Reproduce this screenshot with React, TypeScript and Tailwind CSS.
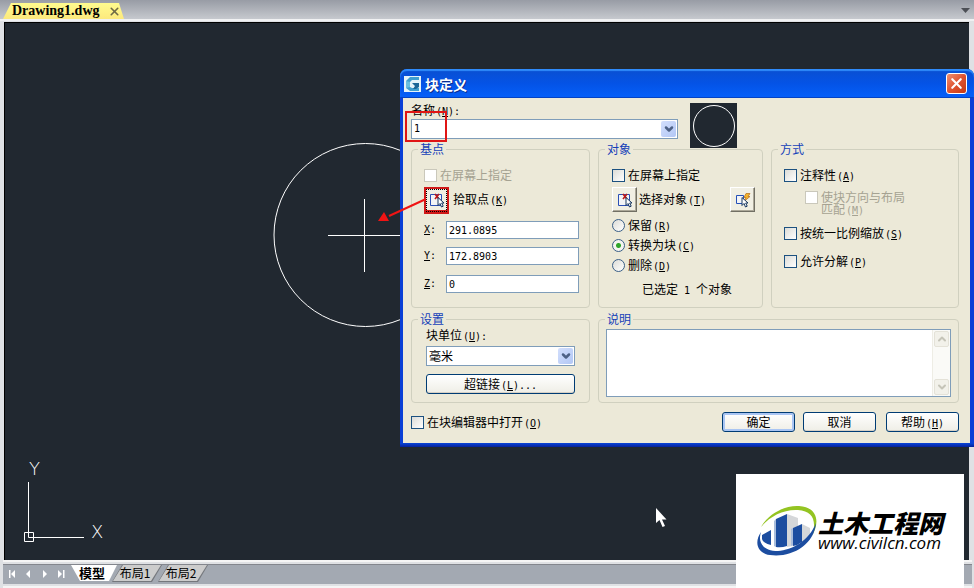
import { clsx } from "clsx";
import { ChevronDown, ChevronUp, X } from "lucide-react";
import type { ReactNode } from "react";

const LATIN = "font-['DejaVu_Sans_Mono',monospace] text-[10px]";

function Key({ children, tail }: { children: string; tail?: string }) {
  return (
    <span className={clsx("pl-px leading-0", LATIN)}>
      (<u className="underline-offset-1">{children}</u>){tail}
    </span>
  );
}

function Group({
  title,
  className,
  children,
}: {
  title: string;
  className?: string;
  children: ReactNode;
}) {
  return (
    <fieldset
      className={clsx("min-w-0 rounded-[4px] border border-[#d0d0bf]", className)}
    >
      <legend className="ml-1.5 px-0.5 leading-4 text-[#1541b8]">{title}</legend>
      {children}
    </fieldset>
  );
}

function Check({
  id,
  disabled,
  className,
  children,
}: {
  id: string;
  disabled?: boolean;
  className?: string;
  children: ReactNode;
}) {
  return (
    <div className={clsx("flex items-center gap-[3px]", className)}>
      <input
        id={id}
        type="checkbox"
        disabled={disabled}
        className="size-[13px] shrink-0 appearance-none border border-[#1c5180] bg-linear-to-br from-[#dcdcd7] to-white checked:bg-[#21a121] disabled:border-[#cac8bb] disabled:bg-white disabled:bg-none"
      />
      <label htmlFor={id} className={disabled ? "text-[#a5a292]" : undefined}>
        {children}
      </label>
    </div>
  );
}

function Radio({
  id,
  defaultChecked,
  children,
}: {
  id: string;
  defaultChecked?: boolean;
  children: ReactNode;
}) {
  return (
    <div className="flex h-5 items-center gap-[3px]">
      <input
        id={id}
        type="radio"
        name="objects"
        defaultChecked={defaultChecked}
        className="size-[13px] shrink-0 appearance-none rounded-full border border-[#3a5f87] bg-linear-to-br from-[#dcdcd7] to-white checked:bg-[radial-gradient(circle,#2fa52b_0,#2fa52b_2px,#f4f4f0_3px)]"
      />
      <label htmlFor={id}>{children}</label>
    </div>
  );
}

function Dropdown({ id, value, latin }: { id: string; value: string; latin?: boolean }) {
  return (
    <div className="relative">
      <select
        id={id}
        defaultValue={value}
        className={clsx(
          "block h-5 w-full appearance-none border border-[#7f9db9] bg-white pl-0.5 leading-4",
          latin && LATIN,
        )}
      >
        <option>{value}</option>
      </select>
      <span className="pointer-events-none absolute top-0.5 right-0.5 flex h-4 w-[15px] items-center justify-center rounded-[2px] bg-linear-to-br from-[#d3dffc] to-[#b2c7f5]">
        <ChevronDown size={12} strokeWidth={5} color="#4d6185" />
      </span>
    </div>
  );
}

function Coordinate({
  axis,
  value,
  className,
}: {
  axis: string;
  value: string;
  className?: string;
}) {
  const id = `base-${axis}`;
  return (
    <div className={clsx("flex items-center", LATIN, className)}>
      <label htmlFor={id} className="w-[22px]">
        <u className="underline-offset-1">{axis}</u>:
      </label>
      <input
        id={id}
        defaultValue={value}
        className="h-[18px] w-[133px] border border-[#7f9db9] bg-white px-0.5"
      />
    </div>
  );
}

function PushButton({
  primary,
  className,
  children,
}: {
  primary?: boolean;
  className?: string;
  children: ReactNode;
}) {
  return (
    <button
      type="button"
      className={clsx(
        "h-5 rounded-[3px] border border-[#003c74] bg-linear-to-b from-white to-[#efeee6] leading-4",
        primary
          ? "shadow-[inset_0_0_0_2px_#a9c5f3]"
          : "shadow-[inset_0_-1px_0_#d6d0c5]",
        className,
      )}
    >
      {children}
    </button>
  );
}

function PickIcon() {
  return (
    <svg width="16" height="16" viewBox="0 0 16 16" fill="none">
      <path d="M1.500 2.500h11v11h-11z" fill="#f3f4f6" stroke="#2b4fb5" />
      <path d="M6 2l4 5M10 2L6 7" stroke="#c01818" strokeWidth="1.600" />
      <path d="M9 5.500v8l2-2 1.500 3.500 1.700-.8-1.500-3.200H15z" fill="#fff" stroke="#17365f" />
    </svg>
  );
}

function QuickSelectIcon() {
  return (
    <svg width="16" height="16" viewBox="0 0 16 16" fill="none">
      <path d="M1.500 3.500h7v8h-7z" fill="#f3f4f6" stroke="#2450b8" />
      <path d="M11 1.500h4l-2 3h2L9.500 9l1.500-3.500H9z" fill="#f5b52b" stroke="#bd7723" strokeWidth=".8" />
      <path d="M7 5.500v8l2-2 1.500 3.500 1.700-.8-1.500-3.200H13z" fill="#fff" stroke="#17365f" />
    </svg>
  );
}

function ToolButton({ label, children }: { label: string; children: ReactNode }) {
  return (
    <button
      type="button"
      aria-label={label}
      className="flex size-[25px] shrink-0 items-center justify-center border border-t-white border-r-[#716f64] border-b-[#716f64] border-l-white bg-[#f1efe3] shadow-[inset_-1px_-1px_0_#aca899]"
    >
      {children}
    </button>
  );
}

function BlockDialog() {
  return (
    <section
      aria-label="块定义"
      className="absolute top-[69px] right-0 left-[400px] rounded-t-[7px] bg-[#0a3fd6] text-xs text-black"
    >
      <header className="flex h-[29px] items-center rounded-t-[7px] bg-linear-to-b from-[#0a4fd0] via-[#0453e6] to-[#0560fa] pr-[7px] pl-1 shadow-[inset_0_2px_1px_#2f8bfb,inset_0_-1px_0_#0443c4]">
        <svg width="17" height="16" viewBox="0 0 17 16">
          <path d="M0 0h17v16H0z" fill="#e4f3fa" />
          <path d="M2 5l4-4h9v3H8L6 6v5l2 1h7v3H6l-4-3z" fill="#3f9fd0" />
          <path d="M8 7h7v4l-3 2H9l2-3z" fill="#1b6697" />
          <path d="M2 5l4 1v5l-4 1z" fill="#68bfdf" />
        </svg>
        <h1 className="ml-1 flex-1 text-[14px] leading-4 font-bold text-white [text-shadow:1px_1px_0_#0b2f8f]">
          块定义
        </h1>
        <button
          type="button"
          aria-label="关闭"
          className="flex size-[21px] items-center justify-center rounded-[3px] border border-white bg-linear-to-br from-[#ee8f71] via-[#df5330] to-[#c53a12]"
        >
          <X size={17} strokeWidth={3} color="#fff" />
        </button>
      </header>

      <form className="mr-1 ml-[3px] bg-[#ece9d8] pr-[11px] pl-2">
        <div className="flex h-[50px] items-start gap-3 pt-1">
          <div className="w-[267px]">
            <label htmlFor="name" className="block h-[17px] leading-4">
              名称<Key tail=":">N</Key>
            </label>
            <Dropdown id="name" value="1" latin />
          </div>
          <svg width="47" height="45" viewBox="0 0 47 45" className="mt-px">
            <path d="M0 0h47v45H0z" fill="#212830" />
            <circle cx="24" cy="23" r="20.500" fill="none" stroke="#fff" />
          </svg>
        </div>

        <div className="-mt-[7px] flex gap-2">
          <Group title="基点" className="h-[167px] w-[179px] shrink-0">
            <div className="pt-2.5 pl-3">
              <Check id="base-screen" disabled className="h-4">
                在屏幕上指定
              </Check>
              <div className="mt-1 flex h-[27px] gap-1">
                <button
                  id="pick-point"
                  type="button"
                  aria-label="拾取点"
                  className="flex h-[27px] w-[25px] items-center justify-center border-2 border-b-4 border-[#d01818] bg-[#f1efe3] outline-1 -outline-offset-3 outline-black outline-dotted"
                >
                  <PickIcon />
                </button>
                <label htmlFor="pick-point" className="leading-6">
                  拾取点<Key>K</Key>
                </label>
              </div>
              <Coordinate axis="X" value="291.0895" className="mt-[7px]" />
              <Coordinate axis="Y" value="172.8903" className="mt-2" />
              <Coordinate axis="Z" value="0" className="mt-2.5" />
            </div>
          </Group>

          <Group title="对象" className="h-[167px] w-[165px] shrink-0">
            <div className="px-[13px] pt-2.5">
              <Check id="object-screen" className="h-4">
                在屏幕上指定
              </Check>
              <div className="mt-1 -mr-1.5 flex h-7 gap-0.5">
                <ToolButton label="选择对象">
                  <PickIcon />
                </ToolButton>
                <span className="flex-1 leading-6">
                  选择对象<Key>T</Key>
                </span>
                <ToolButton label="快速选择">
                  <QuickSelectIcon />
                </ToolButton>
              </div>
              <Radio id="keep">
                保留<Key>R</Key>
              </Radio>
              <Radio id="convert" defaultChecked>
                转换为块<Key>C</Key>
              </Radio>
              <Radio id="delete">
                删除<Key>D</Key>
              </Radio>
              <p className="mt-1.5 pl-[30px] leading-4">
                已选定<span className={clsx("px-1.5", LATIN)}>1</span>个对象
              </p>
            </div>
          </Group>

          <Group title="方式" className="h-[167px] flex-1">
            <div className="pt-2.5 pl-3">
              <Check id="annotative" className="h-4">
                注释性<Key>A</Key>
              </Check>
              <Check
                id="match"
                disabled
                className="mt-2 ml-[21px] h-6 items-start leading-3"
              >
                使块方向与布局
                <br />
                匹配<Key>M</Key>
              </Check>
              <Check id="scale" className="mt-2.5 h-4">
                按统一比例缩放<Key>S</Key>
              </Check>
              <Check id="explode" className="mt-3 h-4">
                允许分解<Key>P</Key>
              </Check>
            </div>
          </Group>
        </div>

        <div className="mt-[3px] flex gap-2">
          <Group title="设置" className="w-[179px] shrink-0">
            <div className="px-3.5 pb-2">
              <label htmlFor="unit" className="mb-[3px] block h-4 leading-4">
                块单位<Key tail=":">U</Key>
              </label>
              <Dropdown id="unit" value="毫米" />
              <PushButton className="mt-2 w-full">
                超链接<Key tail="...">L</Key>
              </PushButton>
            </div>
          </Group>

          <Group title="说明" className="flex-1">
            <div className="mx-[7px] mt-0.5 flex h-[68px] border border-[#7f9db9] bg-white">
              <textarea aria-label="说明" className="min-w-0 flex-1 resize-none px-1" />
              <div className="flex w-[18px] flex-col justify-between border-l border-[#eeede5] bg-[#fafaf7] p-px">
                <span className="flex h-4 items-center justify-center rounded-[2px] border border-[#e4e2d8] bg-[#f2f1ea]">
                  <ChevronUp size={12} strokeWidth={4} color="#c5c4b8" />
                </span>
                <span className="flex h-4 items-center justify-center rounded-[2px] border border-[#e4e2d8] bg-[#f2f1ea]">
                  <ChevronDown size={12} strokeWidth={4} color="#c5c4b8" />
                </span>
              </div>
            </div>
          </Group>
        </div>

        <div className="flex items-center pt-[9px] pb-[11px]">
          <Check id="open-editor" className="flex-1">
            在块编辑器中打开<Key>O</Key>
          </Check>
          <PushButton primary className="w-[73px]">
            确定
          </PushButton>
          <PushButton className="ml-2 w-[73px]">取消</PushButton>
          <PushButton className="ml-2.5 w-[73px]">
            帮助<Key>H</Key>
          </PushButton>
        </div>
      </form>
      <div className="h-1 bg-linear-to-b from-[#0a45d8] to-[#06209a]" />
    </section>
  );
}

// Model space geometry, the UCS marker and the mouse pointer
function Drawing() {
  return (
    <>
      <svg
        width="200"
        height="200"
        viewBox="0 0 200 200"
        className="absolute top-[112px] left-[259px]"
        fill="none"
        stroke="#fff"
      >
        <circle cx="101.500" cy="100" r="91.500" />
        <path d="M64 100.500h73M100.500 64v73" />
      </svg>
      <svg
        width="100"
        height="90"
        viewBox="0 0 100 90"
        className="absolute bottom-3 left-[15px]"
        fill="none"
        stroke="#fff"
      >
        <path d="M8.500 24v55.500H64M4.500 74.500h9v9h-9z" />
        <g
          fill="#fff"
          stroke="none"
          className="font-['DejaVu_Sans',sans-serif] text-[18px] font-extralight"
        >
          <text x="9" y="17">
            Y
          </text>
          <text x="71" y="80">
            X
          </text>
        </g>
      </svg>
      <svg
        width="12"
        height="20"
        viewBox="0 0 12 20"
        className="absolute bottom-8 left-[651px]"
        fill="#fff"
      >
        <path d="M0 0v15l3.500-3L6.500 19l2.500-1-3-6.500h4.500z" />
      </svg>
    </>
  );
}

function SheetTab({ children }: { children: ReactNode }) {
  return (
    <div className="w-[50px] bg-[#74777c] px-px pb-px [clip-path:polygon(10px_0,100%_0,calc(100%-10px)_100%,0_100%)]">
      <button
        type="button"
        className="block h-4 w-full bg-[#cccccc] pr-1 leading-4 [clip-path:polygon(10px_0,100%_0,calc(100%-10px)_100%,0_100%)]"
      >
        {children}
      </button>
    </div>
  );
}

function LayoutTabs() {
  return (
    <nav className="flex h-5 items-start border-t border-[#83868d] bg-[#a3a9b2] text-xs text-black">
      <svg width="68" height="17" viewBox="0 0 68 17" fill="#fff">
        <path d="M6 5h1.500v8H6zM12 5v8l-4-4zM27 5v8l-4-4zM40 5v8l4-4zM55 5v8l4-4zM60 5h1.500v8H60z" />
      </svg>
      <button
        type="button"
        className="z-10 h-4 w-[46px] bg-white pr-1 text-[13px] leading-4 font-bold [clip-path:polygon(0_0,100%_0,calc(100%-8px)_100%,9px_100%)]"
      >
        模型
      </button>
      <div className="-ml-[5px] flex -space-x-1">
        <SheetTab>布局1</SheetTab>
        <SheetTab>布局2</SheetTab>
      </div>
    </nav>
  );
}

function Watermark() {
  return (
    <aside className="absolute right-2.5 bottom-0 flex h-[114px] w-[228px] items-center bg-white pl-5 text-black">
      <svg width="62" height="54" viewBox="0 0 62 54" className="shrink-0">
        <path d="M5 23C12 10 29 1 43 2c17 1 22 14 13 30 5-15 1-25-14-26C28 5 14 12 5 23z" fill="#94c422" />
        <path d="M31 10l11 4v27l-11 2z" fill="#d5d7d9" />
        <path d="M46 20l8 4v8q-3 4-8 7z" fill="#d5d7d9" />
        <path d="M20 15l11-5v32q-6 2-11 1z" fill="#1c4da0" />
        <path d="M6 31l9-5v15q-8-2-9-6z" fill="#1c4da0" />
        <path d="M37 24l9-4v18q-4 3-9 4z" fill="#1c4da0" />
        <path d="M20 15l-2 2v25l2 1zM37 24l-2 1v17l2-1z" fill="#a9bddb" />
        <path d="M5 28C-2 38 1 49 14 51 34 54 58 42 60 19 53 37 36 46 22 47 9 47 1 40 5 28z" fill="#1c4da0" />
      </svg>
      <div>
        <p className="text-[25px] leading-6 font-black whitespace-nowrap italic">
          土木工程网
        </p>
        <p className="font-['Open_Sans',sans-serif] text-[17px] leading-[18px] font-medium italic">
          www.civilcn.com
        </p>
      </div>
    </aside>
  );
}

export default function App() {
  return (
    <div className="relative flex min-h-screen flex-col overflow-hidden bg-[#dfe1e4] font-['Noto_Sans_CJK_SC',sans-serif]">
      <header className="flex h-[19px] items-end justify-between bg-linear-to-b from-[#989ca5] to-[#c6c9ce] pr-[3px] pl-[3px]">
        <div className="flex h-4 w-[121px] items-center justify-between bg-linear-to-b from-[#fffb8e] to-[#fce97d] pr-[3px] pl-[9px] [clip-path:polygon(8px_0,116px_0,100%_100%,0_100%)]">
          <span className="font-['Liberation_Serif',serif] text-sm leading-4 font-bold text-black">
            Drawing1.dwg
          </span>
          <button type="button" aria-label="关闭图形">
            <X size={13} strokeWidth={3} color="#6f6a45" />
          </button>
        </div>
        <svg width="10" height="19" viewBox="0 0 10 19">
          <path d="M0 8h9l-4.500 5z" fill="#4c4f55" />
        </svg>
      </header>

      <div className="flex flex-1 border-t-2 border-[#f0f1f2] pt-px pr-[5px] pl-1">
        <main className="relative flex-1 border-t border-l border-black bg-[#212830]">
          <Drawing />
        </main>
      </div>

      <footer className="mr-0.5 ml-[3px] border-y-2 border-[#f5f5f5] py-0.5">
        <LayoutTabs />
      </footer>

      <BlockDialog />

      <div className="pointer-events-none absolute top-[111px] left-[405px] h-[31px] w-[42px] border-2 border-[#e01515]" />
      <svg
        width="52"
        height="28"
        viewBox="0 0 52 28"
        className="pointer-events-none absolute top-[197px] left-[375px]"
      >
        <path d="M51 2L14 19" stroke="#f01414" strokeWidth="2" />
        <path d="M3 24l6-9 5 9z" fill="#f01414" />
      </svg>

      <Watermark />
    </div>
  );
}
